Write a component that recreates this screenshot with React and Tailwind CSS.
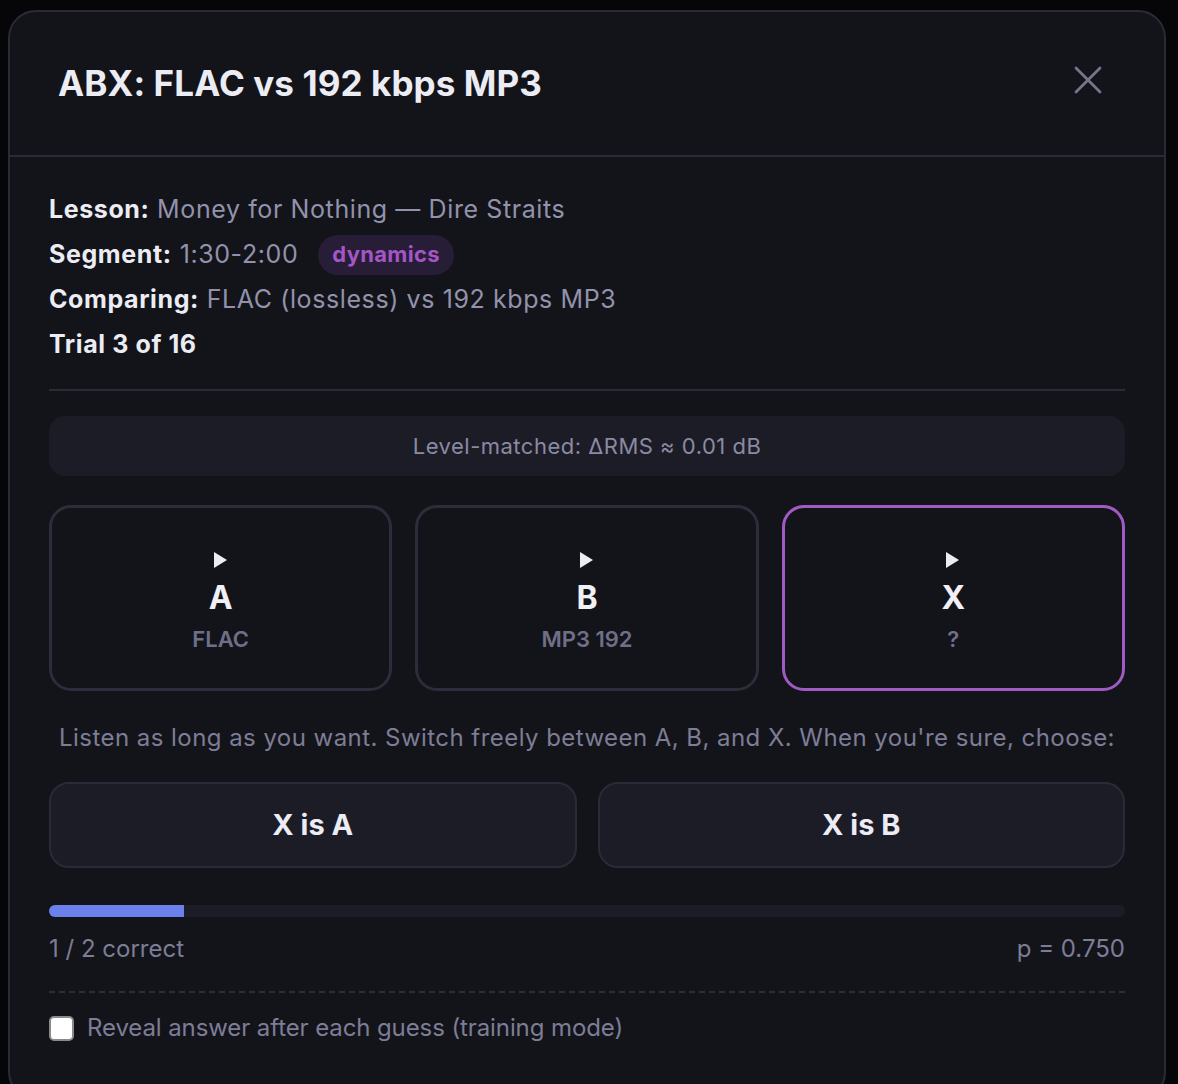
import { X } from "lucide-react";

function SourceCard({ letter, label, active }) {
  return (
    <button
      className={
        "flex h-[186px] flex-col items-center justify-center rounded-[22px] border-[3px] bg-[#131419] pt-[8px] " +
        (active ? "border-[#a05ac4]" : "border-[#2c2c3a]")
      }
    >
      <svg width="16" height="18" viewBox="0 0 16 18" className="mb-[10px]">
        <path d="M1 1 L14 9 L1 17 Z" fill="#ececf4" />
      </svg>
      <span className="text-[32px] font-bold leading-[38px] text-[#f0f0f6]">{letter}</span>
      <span className="mt-[8px] text-[22px] font-semibold leading-[28px] text-[#6f6f89]">{label}</span>
    </button>
  );
}

export default function App() {
  return (
    <div
      className="min-h-[1084px] bg-[#060608] pl-[8px] pr-[12px] pt-[10px]"
      style={{ fontFamily: "Inter, 'Noto Sans', sans-serif" }}
    >
      <div className="h-[1090px] overflow-hidden rounded-[28px] border-2 border-[#2a2a38] bg-[#131419]">
        {/* header */}
        <div className="flex h-[145px] items-center justify-between border-b-2 border-[#2a2a38] pl-[48px] pr-[52px]">
          <h1 className="text-[35px] font-bold tracking-[0.1px] text-[#ececf4]">ABX: FLAC vs 192 kbps MP3</h1>
          <X size={48} strokeWidth={1.4} className="mb-[7px] text-[#75758f]" />
        </div>

        {/* body */}
        <div className="px-[39px] pt-[30px]">
          <div className="text-[25px] leading-[45px] tracking-[0.6px] text-[#9292ac]">
            <div>
              <span className="font-bold text-[#ececf4]">Lesson:</span> Money for Nothing — Dire Straits
            </div>
            <div className="flex items-center">
              <span className="font-bold text-[#ececf4]">Segment:</span>
              <span className="ml-[8px]">1:30-2:00</span>
              <span className="ml-[20px] flex h-[40px] items-center rounded-full bg-[#271d37] px-[14px] text-[22px] font-bold tracking-[0.3px] text-[#a455c6]">
                dynamics
              </span>
            </div>
            <div>
              <span className="font-bold text-[#ececf4]">Comparing:</span> FLAC (lossless) vs 192 kbps MP3
            </div>
            <div className="font-bold text-[#ececf4]">Trial 3 of 16</div>
          </div>

          <div className="mt-[22px] border-t-2 border-[#2a2a38]" />

          <div className="mt-[25px] flex h-[60px] items-center justify-center rounded-[16px] bg-[#1c1c27] text-[22px] tracking-[0.5px] text-[#8a8aa2]">
            Level-matched: ΔRMS ≈ 0.01 dB
          </div>

          <div className="mt-[29px] grid grid-cols-3 gap-[23px]">
            <SourceCard letter="A" label="FLAC" />
            <SourceCard letter="B" label="MP3 192" />
            <SourceCard letter="X" label="?" active />
          </div>

          <p className="mt-[32px] text-center text-[24px] leading-[30px] tracking-[0.45px] text-[#7d7d97]">
            Listen as long as you want. Switch freely between A, B, and X. When you're sure, choose:
          </p>

          <div className="mt-[29px] grid grid-cols-2 gap-[21px]">
            <button className="h-[86px] rounded-[20px] border-2 border-[#2a2a38] bg-[#1c1c27] text-[29px] font-bold text-[#ececf4]">
              X is A
            </button>
            <button className="h-[86px] rounded-[20px] border-2 border-[#2a2a38] bg-[#1c1c27] text-[29px] font-bold text-[#ececf4]">
              X is B
            </button>
          </div>

          <div className="mt-[37px] h-[12px] overflow-hidden rounded-full bg-[#1c1c27]">
            <div className="h-full bg-[#6a80ea]" style={{ width: "12.5%" }} />
          </div>

          <div className="mt-[17px] flex justify-between text-[24px] leading-[30px] text-[#7d7d97]">
            <span>1 / 2 correct</span>
            <span>p = 0.750</span>
          </div>

          <div className="mt-[27px] border-t-2 border-dashed border-[#2c2c3a]" />

          <label className="mt-[20px] flex items-center gap-[13px] text-[24px] leading-[30px] tracking-[-0.1px] text-[#7d7d97]">
            <span className="h-[25px] w-[25px] rounded-[5px] border-2 border-[#8a8a8a] bg-white" />
            Reveal answer after each guess (training mode)
          </label>
        </div>
      </div>
    </div>
  );
}
